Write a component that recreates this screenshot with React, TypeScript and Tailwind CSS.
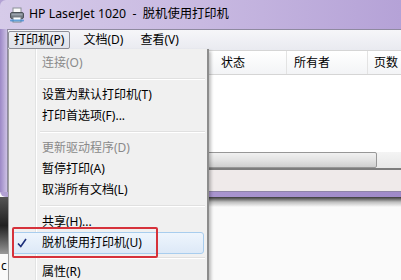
import React from "react";

const menuItems: Array<
  | { type: "item"; label: string; disabled?: boolean; checked?: boolean; h: string }
  | { type: "sep"; h: string }
> = [
  { type: "item", label: "连接(O)", disabled: true, h: "h-[21px]" },
  { type: "sep", h: "h-[11px]" },
  { type: "item", label: "设置为默认打印机(T)", h: "h-[21px]" },
  { type: "item", label: "打印首选项(F)...", h: "h-[21px]" },
  { type: "sep", h: "h-[11px]" },
  { type: "item", label: "更新驱动程序(D)", disabled: true, h: "h-[21px]" },
  { type: "item", label: "暂停打印(A)", h: "h-[21px]" },
  { type: "item", label: "取消所有文档(L)", h: "h-[21px]" },
  { type: "sep", h: "h-[11px]" },
  { type: "item", label: "共享(H)...", h: "h-[21px]" },
  { type: "item", label: "脱机使用打印机(U)", checked: true, h: "h-[22px]" },
  { type: "sep", h: "h-[7px]" },
  { type: "item", label: "属性(R)", h: "h-[21px]" },
];

function PrinterIcon() {
  return (
    <svg width="16" height="16" viewBox="0 0 16 16">
      <rect x="4" y="1" width="8" height="5" fill="#fbfbfb" stroke="#8a8f96" strokeWidth="1" />
      <rect x="1.5" y="5.5" width="13" height="6" rx="1.5" fill="#6f767f" stroke="#4d535a" />
      <rect x="2.5" y="6.5" width="11" height="2" fill="#9aa2ab" />
      <rect x="4" y="10" width="8" height="5" fill="#ffffff" stroke="#7c8389" strokeWidth="1" />
      <rect x="1" y="12.5" width="14" height="2" rx="1" fill="#3f8ccf" opacity="0.8" />
    </svg>
  );
}

function CheckMark() {
  return (
    <svg width="10" height="10" viewBox="0 0 10 10">
      <path d="M1 5.5 L3.8 8.5 L9 1" fill="none" stroke="#1d2f7a" strokeWidth="1.6" />
    </svg>
  );
}

function DropdownMenu() {
  return (
    <div className="absolute left-[8px] top-[49px] w-[201px] h-[240px] bg-[#f0f0f0] border-l border-[#a0a0a0] border-r-2 border-r-[#8c8c8c] shadow-[2px_2px_3px_rgba(0,0,0,0.25)]">
      {/* icon column separator */}
      <div className="absolute left-[26px] top-0 bottom-0 w-[2px] border-l border-[#e2e3e3] bg-white" />
      <div className="relative flex flex-col pt-[3px]">
        {menuItems.map((it, i) =>
          it.type === "sep" ? (
            <div key={i} className={`${it.h} flex items-center pl-[31px] pr-[2px]`}>
              <div className="w-full h-[2px] border-t border-[#e0e0e0] bg-white" />
            </div>
          ) : (
            <div key={i} className={`${it.h} relative flex items-center`}>
              {it.checked && (
                <div className="absolute left-[3px] right-[3px] top-0 bottom-0 rounded-[3px] border border-[#a8cdee] bg-gradient-to-b from-[#eef5fd] to-[#dde9f7]" />
              )}
              {it.checked && (
                <div className="absolute left-[8px] top-[6px]">
                  <CheckMark />
                </div>
              )}
              <span
                className={`relative pl-[33px] text-[12px] leading-none ${
                  it.disabled ? "text-[#8a8a8a]" : "text-black"
                }`}
              >
                {it.label}
              </span>
            </div>
          )
        )}
      </div>
      {/* red highlight frame */}
      <div className="absolute left-[3px] top-[178px] w-[146px] h-[31px] border-2 border-[color:#d6323b] rounded-[2px]" />
    </div>
  );
}

export default function App() {
  return (
    <div
      className="relative w-[401px] h-[280px] overflow-hidden bg-[#fafafa]"
      style={{ fontFamily: '"Noto Sans", "Noto Sans CJK SC", sans-serif' }}
    >
      {/* window */}
      <div className="flex flex-col bg-linear-to-r from-[#b3a2d4] via-[#a995cf] to-[#9f8ac9] rounded-bl-[6px] pb-[5px]">
        {/* title bar */}
        <div className="h-[29px] flex items-center gap-[4px] pl-[9px] bg-linear-to-r from-[#d6cbe9] via-[#c8b9e1] to-[#b5a2d7] rounded-tl-[6px]">
          <PrinterIcon />
          <span className="text-[12.3px] text-black whitespace-pre">
            HP LaserJet 1020  -  脱机使用打印机
          </span>
        </div>
        <div className="flex">
          <div className="w-[7px] shrink-0 bg-gradient-to-r from-[#9c88c6] to-[#cdc1e4]" />
          <div className="flex-1 flex flex-col border-l border-t border-[#8f8aa0]">
            {/* menu bar */}
            <div className="h-[20px] flex items-center gap-[9px] bg-gradient-to-b from-[#f6f6f9] to-[#e9eaf0] text-[12px] text-black">
              <div className="h-[18px] flex items-center px-[5px] rounded-[2px] border border-[#8e8f97] bg-gradient-to-b from-[#eef0f5] to-[#dfe2ea]">
                打印机(P)
              </div>
              <div className="px-[4px]">文档(D)</div>
              <div className="px-[4px]">查看(V)</div>
            </div>
            {/* column header */}
            <div className="h-[25px] flex items-center bg-gradient-to-b from-white to-[#f3f4f6] border-y border-[#d5d5d5] text-[12px] text-black">
              <div className="w-[279px] h-full flex items-center justify-end pr-[41px] border-r border-[#e3e3e3]">
                状态
              </div>
              <div className="w-[81px] h-full flex items-center pl-[7px] border-r border-[#e3e3e3]">所有者</div>
              <div className="flex-1 h-full flex items-center pl-[6px]">页数</div>
            </div>
            {/* list */}
            <div className="h-[77px] bg-white" />
            {/* horizontal scrollbar */}
            <div className="h-[16px] flex bg-[#f0f0f0]">
              <div className="w-[369px] h-full rounded-[2px] border border-[#979797] bg-gradient-to-b from-[#f1f1f1] via-[#e3e3e3] to-[#cfcfcf]" />
              <div className="flex-1 bg-gradient-to-b from-[#f4f4f4] to-[#e8e8e8]" />
            </div>
            <div className="h-[2px] bg-[#7d7d7d]" />
            {/* status bar */}
            <div className="h-[22px] bg-[#efeaea] border-b border-[#8e84a8]" />
          </div>
        </div>
      </div>
      {/* desktop behind */}
      <div className="flex">
        <div className="w-[8px] flex flex-col">
          <div className="h-[57px] bg-gradient-to-b from-[#555] via-[#222] to-[#9a9a9a]" />
          <div className="pl-[1px] text-[12px] leading-[16px] text-black pt-[4px]">c</div>
        </div>
        <div className="flex-1 h-[10px] bg-gradient-to-b from-[#3a3a3a] via-[#bdbdbd] to-[#fafafa]" />
      </div>
      <DropdownMenu />
    </div>
  );
}
